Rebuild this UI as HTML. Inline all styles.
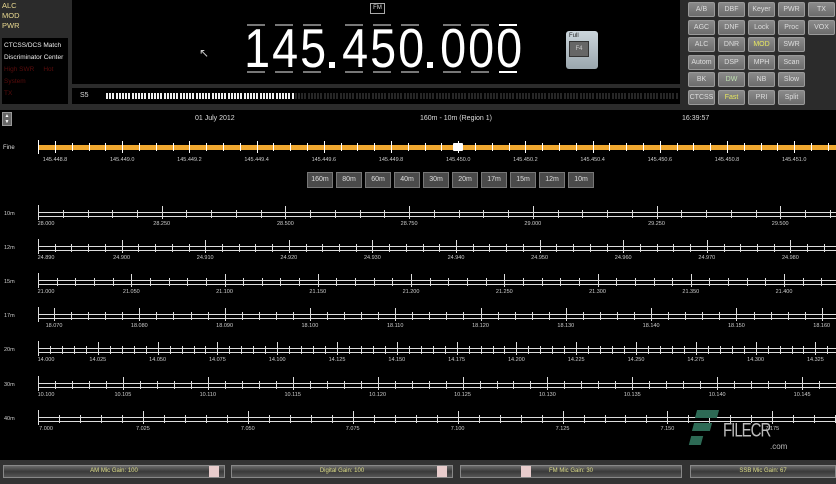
<!DOCTYPE html>
<html><head><meta charset="utf-8"><style>
*{margin:0;padding:0;box-sizing:border-box}
body{width:836px;height:484px;background:#000;position:relative;overflow:hidden;font-family:"Liberation Sans",sans-serif;color:#ddd}
.a{position:absolute}
.btn{position:absolute;width:27px;height:15px;background:linear-gradient(#8a8a8a,#6c6c6c);border:1px solid #9a9a9a;border-radius:2px;color:#ddd;font-size:7px;line-height:13px;text-align:center}
.bb{position:absolute;top:172px;width:26px;height:16px;background:#4a4a4a;border:1px solid #777;color:#ddd;font-size:7px;line-height:14px;text-align:center}
.lab{position:absolute;font-size:5.5px;color:#ccc;transform:translateX(-50%)}
.dg{position:absolute;top:18px;width:28px;text-align:center;font-size:55px;color:#fff;line-height:60px;transform:scaleX(.85)}
.dot{position:absolute;top:62px;width:6px;height:6px;background:#fff}
.ds{position:absolute;height:2px;width:18px;background:#777}
.sl{position:absolute;top:465px;height:13px;border:1px solid #888;background:linear-gradient(#6a6a6a,#3a3a3a 50%,#555);font-size:6px;color:#dd8;text-align:center;line-height:11px}
.th{position:absolute;top:0;width:10px;height:11px;background:#e8cccc}
</style></head><body>
<div class="a" style="left:0;top:0;width:836px;height:110px;background:#2b2b2b"></div>
<div class="a" style="left:2px;top:1px;font-size:7.5px;line-height:10px;color:#e8d890">ALC<br>MOD<br>PWR</div>
<div class="a" style="left:2px;top:38px;width:66px;height:66px;background:#000;font-size:6.5px;line-height:12px;padding:2px;color:#eee">CTCSS/DCS Match<br>Discriminator Center<br><span style="color:#5a0c0c">High SWR &nbsp;&nbsp;&nbsp; Hot<br>System<br>TX</span></div>
<div class="a" style="left:72px;top:0;width:608px;height:84px;background:#000"></div>
<div class="a" style="left:370px;top:3px;width:15px;height:11px;border:1px solid #aaa;font-size:6px;line-height:9px;text-align:center;color:#ddd">FM</div>
<div class="a" style="left:199px;top:46px;font-size:12px;color:#ccc">&#x2196;</div>
<div id="freq"></div>
<div class="a" style="left:566px;top:31px;width:32px;height:38px;background:linear-gradient(#ccd6dc,#9aa6ad);border-radius:3px;font-size:6px;color:#222;padding:2px 3px">Full<div style="margin-top:2px;width:20px;height:16px;background:#666;border:1px solid #333;color:#ccc;text-align:center;line-height:14px">F4</div></div>
<div class="a" style="left:72px;top:88px;width:608px;height:16px;background:#000"></div>
<div class="a" style="left:80px;top:92px;font-size:7px;color:#ddd">S5</div>
<div id="sm"></div>
<div id="btns"></div>
<div class="a" style="left:2px;top:112px;width:10px;height:14px;background:#666;border:1px solid #999;font-size:5px;line-height:6px;text-align:center;color:#fff">▲<br>▼</div>
<div class="a" style="left:195px;top:115px;font-size:7px">01 July 2012</div>
<div class="a" style="left:420px;top:115px;font-size:7px">160m - 10m (Region 1)</div>
<div class="a" style="left:682px;top:115px;font-size:7px">16:39:57</div>
<div class="a" style="left:3px;top:145px;font-size:6px">Fine</div>
<div id="sc"></div>
<div class="a" style="left:0;top:460px;width:836px;height:24px;background:#333"></div>
<div class="sl" style="left:3px;width:222px">AM Mic Gain: 100<div class="th" style="left:205px"></div></div>
<div class="sl" style="left:231px;width:222px">Digital Gain: 100<div class="th" style="left:205px"></div></div>
<div class="sl" style="left:460px;width:222px">FM Mic Gain: 30<div class="th" style="left:60px"></div></div>
<div class="sl" style="left:690px;width:146px">SSB Mic Gain: 67</div>
<div class="a" style="left:690px;top:410px;width:30px;height:42px">
<div class="a" style="left:6px;top:0;width:22px;height:8px;background:#2d6a55;transform:skewX(-15deg)"></div>
<div class="a" style="left:3px;top:13px;width:18px;height:8px;background:#2d6a55;transform:skewX(-15deg)"></div>
<div class="a" style="left:0;top:26px;width:12px;height:9px;background:#2d6a55;transform:skewX(-15deg)"></div></div>
<div class="a" style="left:723px;top:422px;font-size:15px;color:#bbb;letter-spacing:-1px;transform:scaleY(1.3)">FILECR</div>
<div class="a" style="left:770px;top:442px;font-size:8px;color:#bbb">.com</div>
<script>
var h='';
var xs=[242,270,298,-329,340,368,396,-427,438,466,494];var ch="145.450.000".split('');
for(var i=0;i<11;i++){var x=xs[i];if(x<0){h+='<div class="dot" style="left:'+(-x)+'px"></div>';}else{h+='<div class="dg" style="left:'+x+'px">'+ch[i]+'</div>';var c=i==10?'#fff':'#777';h+='<div class="ds" style="left:'+(x+5)+'px;top:24px;background:'+c+'"></div><div class="ds" style="left:'+(x+5)+'px;top:71px;background:'+c+'"></div>';}}
document.getElementById('freq').innerHTML=h;h='';
for(var x=106;x<676;x+=3.2){h+='<div class="a" style="left:'+x.toFixed(1)+'px;top:93px;width:2px;height:6px;background:'+(x<294?'#eee':'#262626')+'"></div>';}
document.getElementById('sm').innerHTML=h;h='';
var B=[["A/B","DBF","Keyer","PWR","TX"],["AGC","DNF","Lock","Proc","VOX"],["ALC","DNR","MOD","SWR",""],["Autom","DSP","MPH","Scan",""],["BK","DW","NB","Slow",""],["CTCSS","Fast","PRI","Split",""]];
for(var r=0;r<6;r++)for(var c=0;c<5;c++){var t=B[r][c];if(!t)continue;var col=(t=="MOD"||t=="Fast")?'#e8e860':(t=="DW"?'#bfe0b0':'#ddd');h+='<div class="btn" style="left:'+(688+c*30)+'px;top:'+(2+r*17.6).toFixed(1)+'px;color:'+col+'">'+t+'</div>';}
document.getElementById('btns').innerHTML=h;h='';
var bn=["160m","80m","60m","40m","30m","20m","17m","15m","12m","10m"];
for(var i=0;i<10;i++)h+='<div class="bb" style="left:'+(307+i*29)+'px">'+bn[i]+'</div>';
h+='<div class="a" style="left:38px;top:145px;width:798px;height:5px;background:#f0a830"></div><div class="a" style="left:38px;top:140px;width:1px;height:14px;background:#fff"></div>';
for(var k=0;k<=48;k++){var x=55+k*16.8;if(x>836)break;var mj=k%4==0;h+='<div class="a" style="left:'+x.toFixed(1)+'px;top:'+(mj?141:143)+'px;width:1px;height:'+(mj?12:8)+'px;background:#fff"></div>';if(mj){var v=145448.8+k/4*0.2;var s=(v/1000).toFixed(4);s=s.slice(0,7)+'.'+s.slice(7,8);h+='<div class="lab" style="left:'+x.toFixed(1)+'px;top:157px">'+s+'</div>';}}
h+='<div class="a" style="left:453px;top:143px;width:10px;height:8px;background:#fff;border-radius:1px"></div>';
var R=[["10m",212,28.000,0.25,38,123.7],["12m",246,24.890,0.01,38,83.6],["15m",280,21.000,0.05,38,93.25],["17m",314,18.070,0.01,54,85.3],["20m",348,14.000,0.025,38,59.8],["30m",383,10.100,0.005,38,84.9],["40m",417,7.000,0.025,38,104.9]];
R.forEach(function(q){var y=q[1];h+='<div class="a" style="left:4px;top:'+(y-1)+'px;font-size:5.5px;color:#ccc">'+q[0]+'</div>';
h+='<div class="a" style="left:38px;top:'+y+'px;width:798px;height:1px;background:#ddd"></div><div class="a" style="left:38px;top:'+(y+4)+'px;width:798px;height:1px;background:#ddd"></div><div class="a" style="left:38px;top:'+(y-7)+'px;width:1px;height:15px;background:#ddd"></div>';
for(var k=-5;k<80;k++){var x=q[4]+k*q[5]/5;if(x<38)continue;if(x>836)break;var mj=k%5==0;h+='<div class="a" style="left:'+x.toFixed(1)+'px;top:'+(mj?y-6:y-2)+'px;width:1px;height:'+(mj?13:8)+'px;background:#ddd"></div>';
if(mj){var v=q[2]+k/5*q[3];h+='<div class="lab" style="left:'+Math.max(x,46).toFixed(1)+'px;top:'+(y+9)+'px">'+v.toFixed(3)+'</div>';}}});
document.getElementById('sc').innerHTML=h;
</script>
</body></html>
